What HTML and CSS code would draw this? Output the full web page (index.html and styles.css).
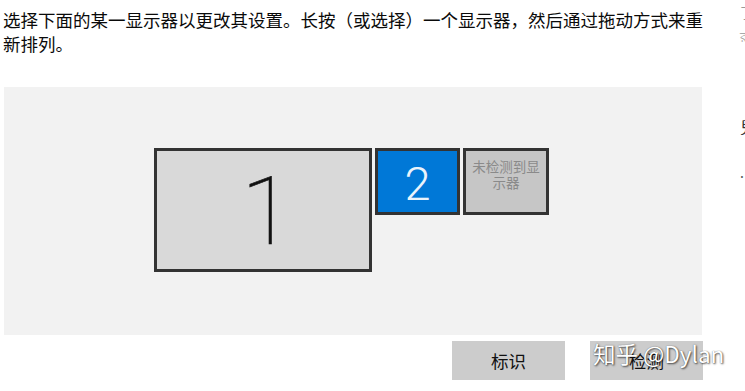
FILE: index.html
```html
<!DOCTYPE html>
<html lang="zh">
<head>
<meta charset="utf-8">
<link rel="stylesheet" href="styles.css">
</head>
<body>
<div class="page">
  <div class="main">
    <p class="intro">选择下面的某一显示器以更改其设置。长按（或选择）一个显示器，然后通过拖动方式来重新排列。</p>
    <div class="panel">
      <div class="monitors">
        <div class="mon mon1"><span>1</span></div>
        <div class="mon mon2"><span>2</span></div>
        <div class="mon mon3"><span>未检测到显示器</span></div>
      </div>
    </div>
    <div class="buttons">
      <div class="btn">标识</div>
      <div class="btn">检测</div>
    </div>
    <div class="watermark">知乎 @Dylan</div>
  </div>
  <div class="side">
    <span class="s1">了</span>
    <span class="s2">র</span>
    <span class="s3">兒</span>
    <span class="s4">.</span>
  </div>
</div>
</body>
</html>
```

FILE: styles.css
```css
html, body {
  margin: 0;
  padding: 0;
  background: #ffffff;
  overflow: hidden;
}
body {
  width: 745px;
  height: 391px;
  font-family: "Noto Sans CJK SC", "Noto Sans", sans-serif;
  color: #000;
}
.page {
  display: flex;
  width: 745px;
  height: 391px;
}
.main {
  position: relative;
  width: 738px;
  flex: none;
}
.intro {
  margin: 0;
  padding: 8px 0 0 3px;
  width: 705px;
  font-size: 17.5px;
  line-height: 24px;
  color: #0a0a0a;
}
.panel {
  margin: 31px 0 0 4px;
  width: 698px;
  height: 248px;
  background: #f2f2f2;
}
.monitors {
  display: flex;
  align-items: flex-start;
  gap: 3px;
  padding: 61px 0 0 150px;
}
.mon {
  box-sizing: border-box;
  border: 3px solid #333333;
  display: flex;
  justify-content: center;
}
.mon1 {
  width: 218px;
  height: 124px;
  background: #d9d9d9;
  align-items: center;
}
.mon1 span {
  font-family: Roboto, "Open Sans", sans-serif;
  font-weight: 100;
  font-size: 94px;
  line-height: 1;
  color: #111;
  margin-left: 8px;
  margin-top: 4px;
  -webkit-text-stroke: 0.6px #111;
}
.mon2 {
  width: 85px;
  height: 67px;
  background: #0078d7;
  align-items: center;
}
.mon2 span {
  font-family: Roboto, "Open Sans", sans-serif;
  font-weight: 300;
  font-size: 47px;
  line-height: 1;
  color: #eaf3fb;
  margin-top: 4px;
}
.mon3 {
  width: 86px;
  height: 67px;
  background: #c6c6c6;
  align-items: flex-start;
}
.mon3 span {
  font-size: 13.5px;
  line-height: 16px;
  color: #8a8a8a;
  text-align: center;
  padding: 7px 3px 0;
}
.buttons {
  display: flex;
  justify-content: flex-end;
  gap: 25px;
  width: 703px;
  margin-top: 6px;
}
.btn {
  width: 113px;
  height: 39px;
  background: #cccccc;
  display: flex;
  align-items: center;
  justify-content: center;
  font-size: 17.5px;
  color: #111;
}
.watermark {
  position: absolute;
  left: 593px;
  top: 338px;
  font-family: "Noto Sans CJK SC", "Noto Sans", sans-serif;
  font-size: 22.5px;
  line-height: 30px;
  color: #ffffff;
  text-shadow: 1px 1px 2px rgba(0,0,0,0.65), 0 0 1px rgba(0,0,0,0.5);
  white-space: nowrap;
}
.side {
  flex: none;
  width: 7px;
  overflow: hidden;
  position: relative;
  font-size: 14px;
  color: #9a9a9a;
}
.side span {
  position: absolute;
  left: 2px;
}
.s1 { top: 2px; }
.s2 { top: 26px; }
.s3 { top: 114px; color: #333; font-size: 16px; }
.s4 { top: 162px; color: #555; }
```
